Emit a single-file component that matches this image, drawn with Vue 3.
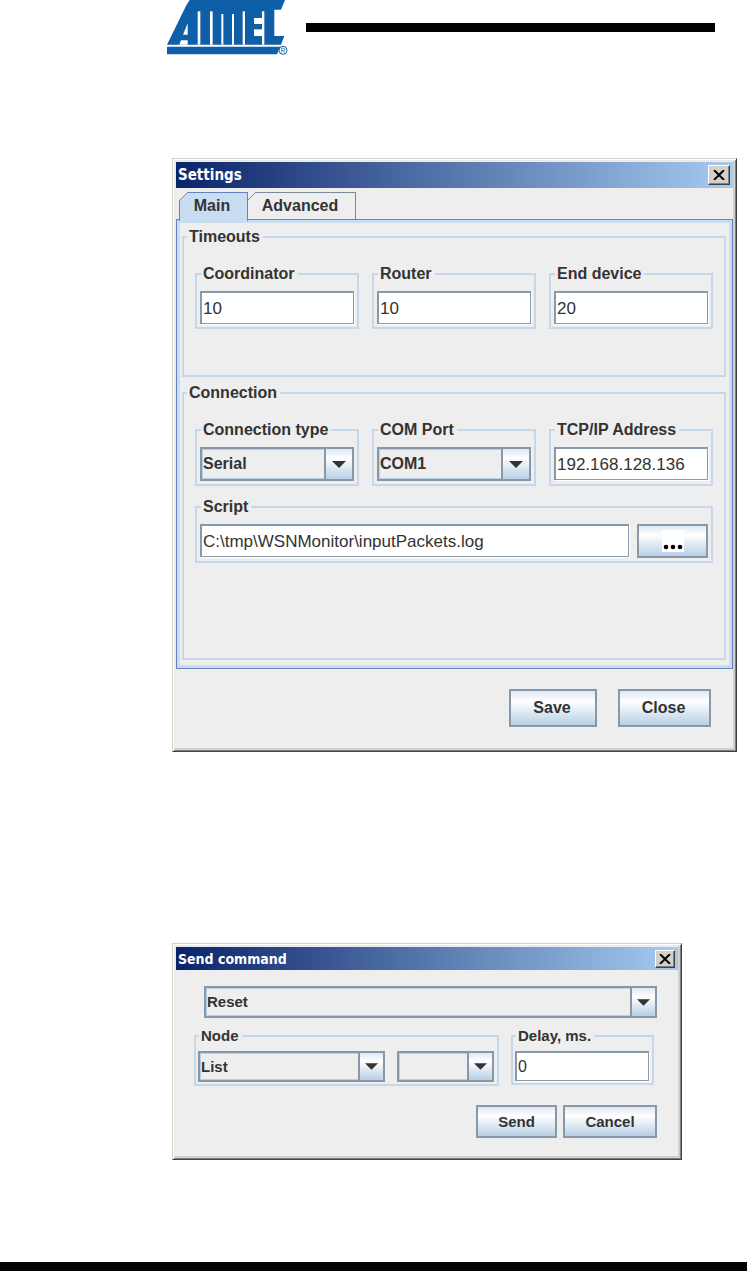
<script setup>
import { ref } from 'vue'

const activeTab = ref('main')
const timeouts = ref([
  { id: 'coordinator', label: 'Coordinator', value: '10' },
  { id: 'router', label: 'Router', value: '10' },
  { id: 'end-device', label: 'End device', value: '20' },
])
const connectionType = ref('Serial')
const comPort = ref('COM1')
const address = ref('192.168.128.136')
const script = ref('C:\\tmp\\WSNMonitor\\inputPackets.log')
const command = ref('Reset')
const node = ref('List')
const nodeItem = ref('')
const delay = ref('0')
</script>

<template>
  <div class="page">
    <header class="masthead">
      <svg class="logo" viewBox="0 0 366 165" role="img" aria-label="Atmel">
        <path fill="#0f5fa8" d="M68 0H354L342 29H322V108H352L342 134H0L58 16Z" />
        <path fill="#0f5fa8" d="M0 140H340L330 163H0Z" />
        <g fill="#fff">
          <path d="M62 70V104H48Z" />
          <path d="M42 121H62V134H37Z" />
          <path d="M92 34H100V134H92Z" />
          <path d="M129 34H137V134H129Z" />
          <path d="M163 42H169V134H163Z" />
          <path d="M195 42H201V134H195Z" />
          <path d="M227 34H234V134H227Z" />
          <path d="M261 54H288V72H261Z" />
          <path d="M261 88H288V108H261Z" />
          <path d="M285 34H292V134H285Z" />
        </g>
        <circle cx="348" cy="151" r="12" fill="#fff" stroke="#0f5fa8" stroke-width="3" />
        <path d="M344 158V145H349Q353 145 353 149T349 152H344M349 152L353 158" fill="none" stroke="#0f5fa8" stroke-width="2" />
      </svg>
      <div class="rule"></div>
    </header>

    <section class="dialog settings" aria-labelledby="settings-title">
      <div class="titlebar">
        <h2 id="settings-title">Settings</h2>
        <button class="close" type="button" aria-label="Close window">
          <svg viewBox="0 0 12 10"><path d="M1 0L11 10M11 0L1 10" /></svg>
        </button>
      </div>
      <div class="tabs" role="tablist">
        <button class="tab main-tab" :class="{ active: activeTab === 'main' }" type="button" role="tab" :aria-selected="activeTab === 'main'" @click="activeTab = 'main'">
          <svg class="corner" viewBox="0 0 10 10"><path class="cut" d="M0 0H10L0 10Z" /><path class="edge" d="M0 10L10 0" /></svg>Main
        </button>
        <button class="tab advanced-tab" :class="{ active: activeTab === 'advanced' }" type="button" role="tab" :aria-selected="activeTab === 'advanced'" @click="activeTab = 'advanced'">
          <svg class="corner" viewBox="0 0 10 10"><path class="cut" d="M0 0H10L0 10Z" /><path class="edge" d="M0 10L10 0" /></svg>Advanced
        </button>
      </div>
      <div class="tab-panel" role="tabpanel">
        <fieldset class="section timeouts">
          <legend>Timeouts</legend>
          <div class="columns">
            <fieldset v-for="t in timeouts" :key="t.id" class="group">
              <legend><label :for="t.id">{{ t.label }}</label></legend>
              <input :id="t.id" v-model="t.value" class="text" type="text" />
            </fieldset>
          </div>
        </fieldset>
        <fieldset class="section connection">
          <legend>Connection</legend>
          <div class="columns">
            <fieldset class="group">
              <legend><label for="connection-type">Connection type</label></legend>
              <div class="combo">
                <select id="connection-type" v-model="connectionType"><option>Serial</option></select>
                <span class="drop"><svg viewBox="0 0 14 7"><path d="M0 0H14L7 7Z" /></svg></span>
              </div>
            </fieldset>
            <fieldset class="group">
              <legend><label for="com-port">COM Port</label></legend>
              <div class="combo">
                <select id="com-port" v-model="comPort"><option>COM1</option></select>
                <span class="drop"><svg viewBox="0 0 14 7"><path d="M0 0H14L7 7Z" /></svg></span>
              </div>
            </fieldset>
            <fieldset class="group">
              <legend><label for="address">TCP/IP Address</label></legend>
              <input id="address" v-model="address" class="text" type="text" />
            </fieldset>
          </div>
          <fieldset class="group script">
            <legend><label for="script">Script</label></legend>
            <div class="script-row">
              <input id="script" v-model="script" class="text" type="text" />
              <button class="push browse" type="button" aria-label="Browse">
                <svg viewBox="0 0 22 22"><path fill="#fff" d="M0 0H22V22H0Z" /><circle cx="4" cy="17" r="2.3" /><circle cx="11" cy="17" r="2.3" /><circle cx="18" cy="17" r="2.3" /></svg>
              </button>
            </div>
          </fieldset>
        </fieldset>
      </div>
      <div class="actions">
        <button class="push save" type="button">Save</button>
        <button class="push dismiss" type="button">Close</button>
      </div>
    </section>

    <section class="dialog send" aria-labelledby="send-title">
      <div class="titlebar">
        <h2 id="send-title">Send command</h2>
        <button class="close" type="button" aria-label="Close window">
          <svg viewBox="0 0 12 10"><path d="M1 0L11 10M11 0L1 10" /></svg>
        </button>
      </div>
      <div class="send-body">
        <div class="combo command">
          <select v-model="command" aria-label="Command"><option>Reset</option></select>
          <span class="drop"><svg viewBox="0 0 14 7"><path d="M0 0H14L7 7Z" /></svg></span>
        </div>
        <div class="send-row">
          <fieldset class="group node">
            <legend>Node</legend>
            <div class="node-row">
              <div class="combo">
                <select v-model="node" aria-label="Node selection"><option>List</option></select>
                <span class="drop"><svg viewBox="0 0 14 7"><path d="M0 0H14L7 7Z" /></svg></span>
              </div>
              <div class="combo">
                <select v-model="nodeItem" aria-label="Node number"><option value=""></option></select>
                <span class="drop"><svg viewBox="0 0 14 7"><path d="M0 0H14L7 7Z" /></svg></span>
              </div>
            </div>
          </fieldset>
          <fieldset class="group delay">
            <legend><label for="delay">Delay, ms.</label></legend>
            <input id="delay" v-model="delay" class="text" type="text" />
          </fieldset>
        </div>
        <div class="send-actions">
          <button class="push" type="button">Send</button>
          <button class="push cancel" type="button">Cancel</button>
        </div>
      </div>
    </section>

    <footer class="footer-rule"></footer>
  </div>
</template>

<style>
body {
  margin: 0;
  background: #fff;
}
</style>

<style scoped>
.page {
  display: flex;
  flex-direction: column;
  min-height: 100vh;
  font-family: "Liberation Sans", Arial, sans-serif;
  color: #333;
}
.page * {
  box-sizing: border-box;
}
button,
input,
select {
  margin: 0;
  padding: 0;
  border-radius: 0;
  font: inherit;
  color: inherit;
}
.masthead {
  display: flex;
  gap: 17px;
  padding: 0 32px 0 167px;
}
.logo {
  width: 122px;
  height: 55px;
}
.rule {
  flex: 1;
  height: 9px;
  margin-top: 23px;
  background: #000;
}

.dialog {
  background: #eee;
  border: 1px solid;
  border-color: #d4d0c8 #404040 #404040 #d4d0c8;
  box-shadow: inset 1px 1px #fff, inset -1px -1px #808080, inset 2px 2px #eae8e3, inset -3px -3px #d4d0c8;
  padding: 3px;
  font-weight: bold;
}
.settings {
  margin: 103px 10px 0 172px;
  font-size: 16px;
}
.send {
  margin: 191px 65px 40px 172px;
  font-size: 15px;
}
.titlebar {
  display: flex;
  align-items: center;
  justify-content: space-between;
  height: 26px;
  padding: 0 3px 0 2px;
  background: linear-gradient(90deg, #0a246a, #a6caf0);
  color: #fff;
}
.send .titlebar {
  height: 23px;
}
h2 {
  margin: 0;
  font-family: "DejaVu Sans Condensed", "DejaVu Sans", sans-serif;
  font-size: 15px;
  line-height: 20px;
}
.send h2 {
  font-size: 14px;
}
.close {
  display: grid;
  place-items: center;
  width: 22px;
  height: 20px;
  background: #d4d0c8;
  border: 1px solid;
  border-color: #fff #404040 #404040 #fff;
  box-shadow: inset -1px -1px #808080;
}
.close svg {
  width: 12px;
  height: 10px;
}
.close path {
  stroke: #000;
  stroke-width: 2;
}
.send .close {
  width: 20px;
  height: 18px;
}

.tabs {
  display: flex;
  padding: 4px 0 0 3px;
}
.tab {
  position: relative;
  height: 27px;
  padding-right: 3px;
  border: 1px solid #7a8a99;
  border-bottom: 0;
  background: #eee;
  font-weight: bold;
}
.main-tab {
  width: 69px;
}
.advanced-tab {
  width: 108px;
  border-left: 0;
}
.active {
  z-index: 1;
  height: 29px;
  margin-bottom: -2px;
  padding-bottom: 2px;
  border-color: #6382bf;
  background: #c8ddf2;
}
.corner {
  position: absolute;
  top: -1px;
  left: -1px;
  width: 9px;
  height: 9px;
}
.cut {
  fill: #eee;
}
.edge {
  fill: none;
  stroke: #6382bf;
}
.tab-panel {
  border: 1px solid #6382bf;
  box-shadow: inset 0 0 0 3px #c8ddf2;
  padding: 7px 6px 8px 5px;
}

fieldset {
  min-width: 0;
  margin: 0;
  border: 2px solid #c5d7e8;
}
legend {
  margin-left: 1px;
  padding: 0 3px 0 2px;
  line-height: 20px;
}
.section {
  padding: 17px 11px 0;
}
.section > legend {
  margin-left: -8px;
}
.timeouts {
  height: 150px;
}
.connection {
  height: 277px;
  margin-top: 6px;
}
.columns {
  display: grid;
  grid-template-columns: repeat(3, 1fr);
  gap: 13px;
}
.group {
  padding: 7px 3px 3px;
}
.text {
  display: block;
  width: 100%;
  height: 33px;
  padding: 1px 1px 0;
  border: 2px solid #8a99a8;
  border-right-width: 1px;
  border-bottom-width: 1px;
  box-shadow: 1px 1px #fff;
  background: #fff;
  font-size: 17px;
  font-weight: normal;
}
.combo {
  display: grid;
  grid-template-columns: 1fr 28px;
  height: 34px;
  border: 2px solid #8998a7;
}
.combo select {
  grid-area: 1 / 1 / 2 / 3;
  min-width: 0;
  width: 100%;
  padding: 0 30px 2px 0;
  appearance: none;
  border: 1px solid #b8cfe5;
  background: #eee;
  font-weight: bold;
}
.drop {
  grid-area: 1 / 2 / 2 / 3;
  display: grid;
  place-items: center;
  border-left: 2px solid #8998a7;
  background: linear-gradient(#dde8f3, #fff 30%, #b8cfe5);
  pointer-events: none;
}
.drop svg {
  width: 14px;
  height: 7px;
}
.drop path {
  fill: #333;
}
.script {
  margin-top: 11px;
}
.script-row {
  display: flex;
  gap: 8px;
}
.script-row .text {
  flex: 1;
}
.push {
  border: 2px solid #8998a7;
  background: linear-gradient(#dde8f3, #fff 30%, #b8cfe5);
  font-weight: bold;
}
.browse {
  display: grid;
  place-items: center;
  width: 71px;
  height: 34px;
}
.browse svg {
  width: 22px;
  height: 22px;
}
.actions {
  display: flex;
  justify-content: flex-end;
  gap: 21px;
  padding: 20px 22px 21px 0;
}
.actions .push {
  width: 88px;
  height: 38px;
  padding-right: 2px;
}
.actions .dismiss {
  width: 93px;
}

.send-body {
  padding: 16px 21px 18px 18px;
}
.send .combo {
  grid-template-columns: 1fr 25px;
  height: 31px;
}
.send .combo select {
  padding: 0 26px 1px 0;
}
.send .drop svg {
  width: 13px;
}
.send .command {
  height: 32px;
  margin-left: 10px;
}
.send-row {
  display: flex;
  align-items: flex-start;
  gap: 12px;
  margin: 8px 3px 0 0;
}
.send .group {
  padding: 5px 3px 2px 2px;
}
.node {
  flex: 1;
}
.delay {
  width: 143px;
}
.node-row {
  display: grid;
  grid-template-columns: 188fr 98fr;
  gap: 12px;
}
.send .text {
  height: 30px;
  font-size: 16px;
}
.send-actions {
  display: flex;
  justify-content: flex-end;
  gap: 6px;
  padding-top: 19px;
}
.send-actions .push {
  width: 81px;
  height: 33px;
}
.send-actions .cancel {
  width: 94px;
}
.footer-rule {
  height: 9px;
  margin-top: auto;
  background: #000;
}
</style>
